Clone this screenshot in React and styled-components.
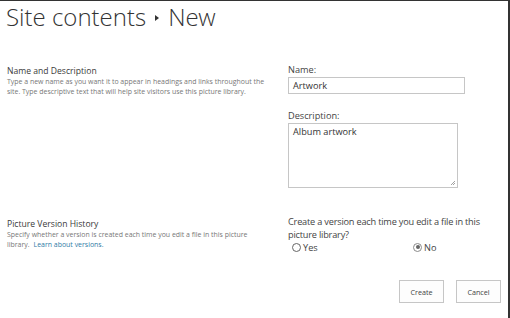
import React from 'react';
import styled, { createGlobalStyle } from 'styled-components';

const GlobalStyle = createGlobalStyle`
  html, body {
    margin: 0;
    padding: 0;
    background: #ffffff;
  }

  body {
    font-family: "Open Sans", "Noto Sans", "Liberation Sans", sans-serif;
    color: #444444;
  }

  * {
    box-sizing: border-box;
  }
`;

const Frame = styled.div`
  width: 510px;
  height: 318px;
  border-top: 1px solid #333333;
  border-right: 2px solid #333333;
  background: #ffffff;
  overflow: hidden;
`;

const Title = styled.h1`
  display: flex;
  align-items: center;
  gap: 9px;
  margin: 0;
  padding: 0 0 0 6px;
  height: 31px;
  font-family: "Open Sans Light", "Noto Sans Light", "Open Sans", sans-serif;
  font-size: 24px;
  font-weight: 300;
  line-height: 31px;
  color: #333333;
`;

const Caret = styled.span`
  display: inline-block;
  width: 0;
  height: 0;
  margin-top: 3px;
  border-top: 3px solid transparent;
  border-bottom: 3px solid transparent;
  border-left: 4px solid #333333;
`;

const Section = styled.div`
  display: grid;
  grid-template-columns: 288px 1fr;
  margin-top: ${({ $top }) => $top}px;
`;

const Info = styled.div`
  padding-left: 7px;
  padding-top: ${({ $offset }) => $offset || 0}px;
`;

const InfoTitle = styled.div`
  font-size: 8.6px;
  line-height: 11px;
  color: #3a3a3a;
`;

const InfoText = styled.p`
  margin: 0;
  width: 272px;
  font-size: 6.95px;
  line-height: 10px;
  color: #777777;
`;

const Link = styled.a`
  color: #2f7ca6;
  text-decoration: none;
  margin-left: 4px;
`;

const Fields = styled.div`
  display: flex;
  flex-direction: column;
`;

const Label = styled.label`
  display: block;
  font-size: 9.2px;
  line-height: 12px;
  color: #444444;
  margin-top: ${({ $top }) => $top || 0}px;
  margin-bottom: 1px;
`;

const TextBox = styled.div`
  width: 177px;
  height: 17px;
  border: 1px solid #c6c6c6;
  padding: 0 4px;
  font-size: 9.2px;
  line-height: 15px;
  color: #333333;
`;

const TextArea = styled.div`
  position: relative;
  width: 170px;
  height: 65px;
  border: 1px solid #c6c6c6;
  padding: 2px 4px;
  font-size: 9.2px;
  line-height: 12px;
  color: #333333;
`;

const Grip = styled.svg`
  position: absolute;
  right: 1px;
  bottom: 1px;
`;

const Question = styled.div`
  width: 196px;
  font-size: 9.2px;
  line-height: 13px;
  letter-spacing: -0.2px;
  color: #444444;
`;

const RadioRow = styled.div`
  display: grid;
  grid-template-columns: 121px auto;
  padding-left: 4px;
`;

const Option = styled.div`
  display: flex;
  align-items: center;
  gap: 2px;
  height: 12px;
  font-size: 9.2px;
  color: #444444;
`;

const Radio = styled.span`
  position: relative;
  display: inline-block;
  width: 9px;
  height: 9px;
  border: 1px solid ${({ $checked }) => ($checked ? '#8a8a8a' : '#666666')};
  border-radius: 50%;
  background: #ffffff;

  &::after {
    content: '';
    display: ${({ $checked }) => ($checked ? 'block' : 'none')};
    position: absolute;
    left: 1.5px;
    top: 1.5px;
    width: 4px;
    height: 4px;
    border-radius: 50%;
    background: #666666;
  }
`;

const Actions = styled.div`
  display: flex;
  justify-content: flex-end;
  gap: 12px;
  padding-right: 7px;
  margin-top: 27px;
`;

const Button = styled.button`
  width: 45px;
  height: 23px;
  padding: 0;
  border: 1px solid #c6c6c6;
  background: #fdfdfd;
  font-family: inherit;
  font-size: 7.2px;
  color: #444444;
`;

export default function App() {
  return (
    <>
      <GlobalStyle />
      <Frame>
        <Title>
          Site contents <Caret /> New
        </Title>

        <Section $top={32}>
          <Info $offset={2}>
            <InfoTitle>Name and Description</InfoTitle>
            <InfoText>
              Type a new name as you want it to appear in headings and links throughout the
              <br />
              site. Type descriptive text that will help site visitors use this picture library.
            </InfoText>
          </Info>
          <Fields>
            <Label>Name:</Label>
            <TextBox>Artwork</TextBox>
            <Label $top={16}>Description:</Label>
            <TextArea>
              Album artwork
              <Grip width="6" height="6" viewBox="0 0 6 6">
                <path d="M5 1L1 5M5 3L3 5" stroke="#8a8a8a" strokeWidth="0.8" />
              </Grip>
            </TextArea>
          </Fields>
        </Section>

        <Section $top={27}>
          <Info $offset={4}>
            <InfoTitle>Picture Version History</InfoTitle>
            <InfoText>
              Specify whether a version is created each time you edit a file in this picture
              <br />
              library.
              <Link href="#">Learn about versions.</Link>
            </InfoText>
          </Info>
          <Fields>
            <Question>Create a version each time you edit a file in this picture library?</Question>
            <RadioRow>
              <Option>
                <Radio />
                Yes
              </Option>
              <Option>
                <Radio $checked />
                No
              </Option>
            </RadioRow>
          </Fields>
        </Section>

        <Actions>
          <Button>Create</Button>
          <Button>Cancel</Button>
        </Actions>
      </Frame>
    </>
  );
}
